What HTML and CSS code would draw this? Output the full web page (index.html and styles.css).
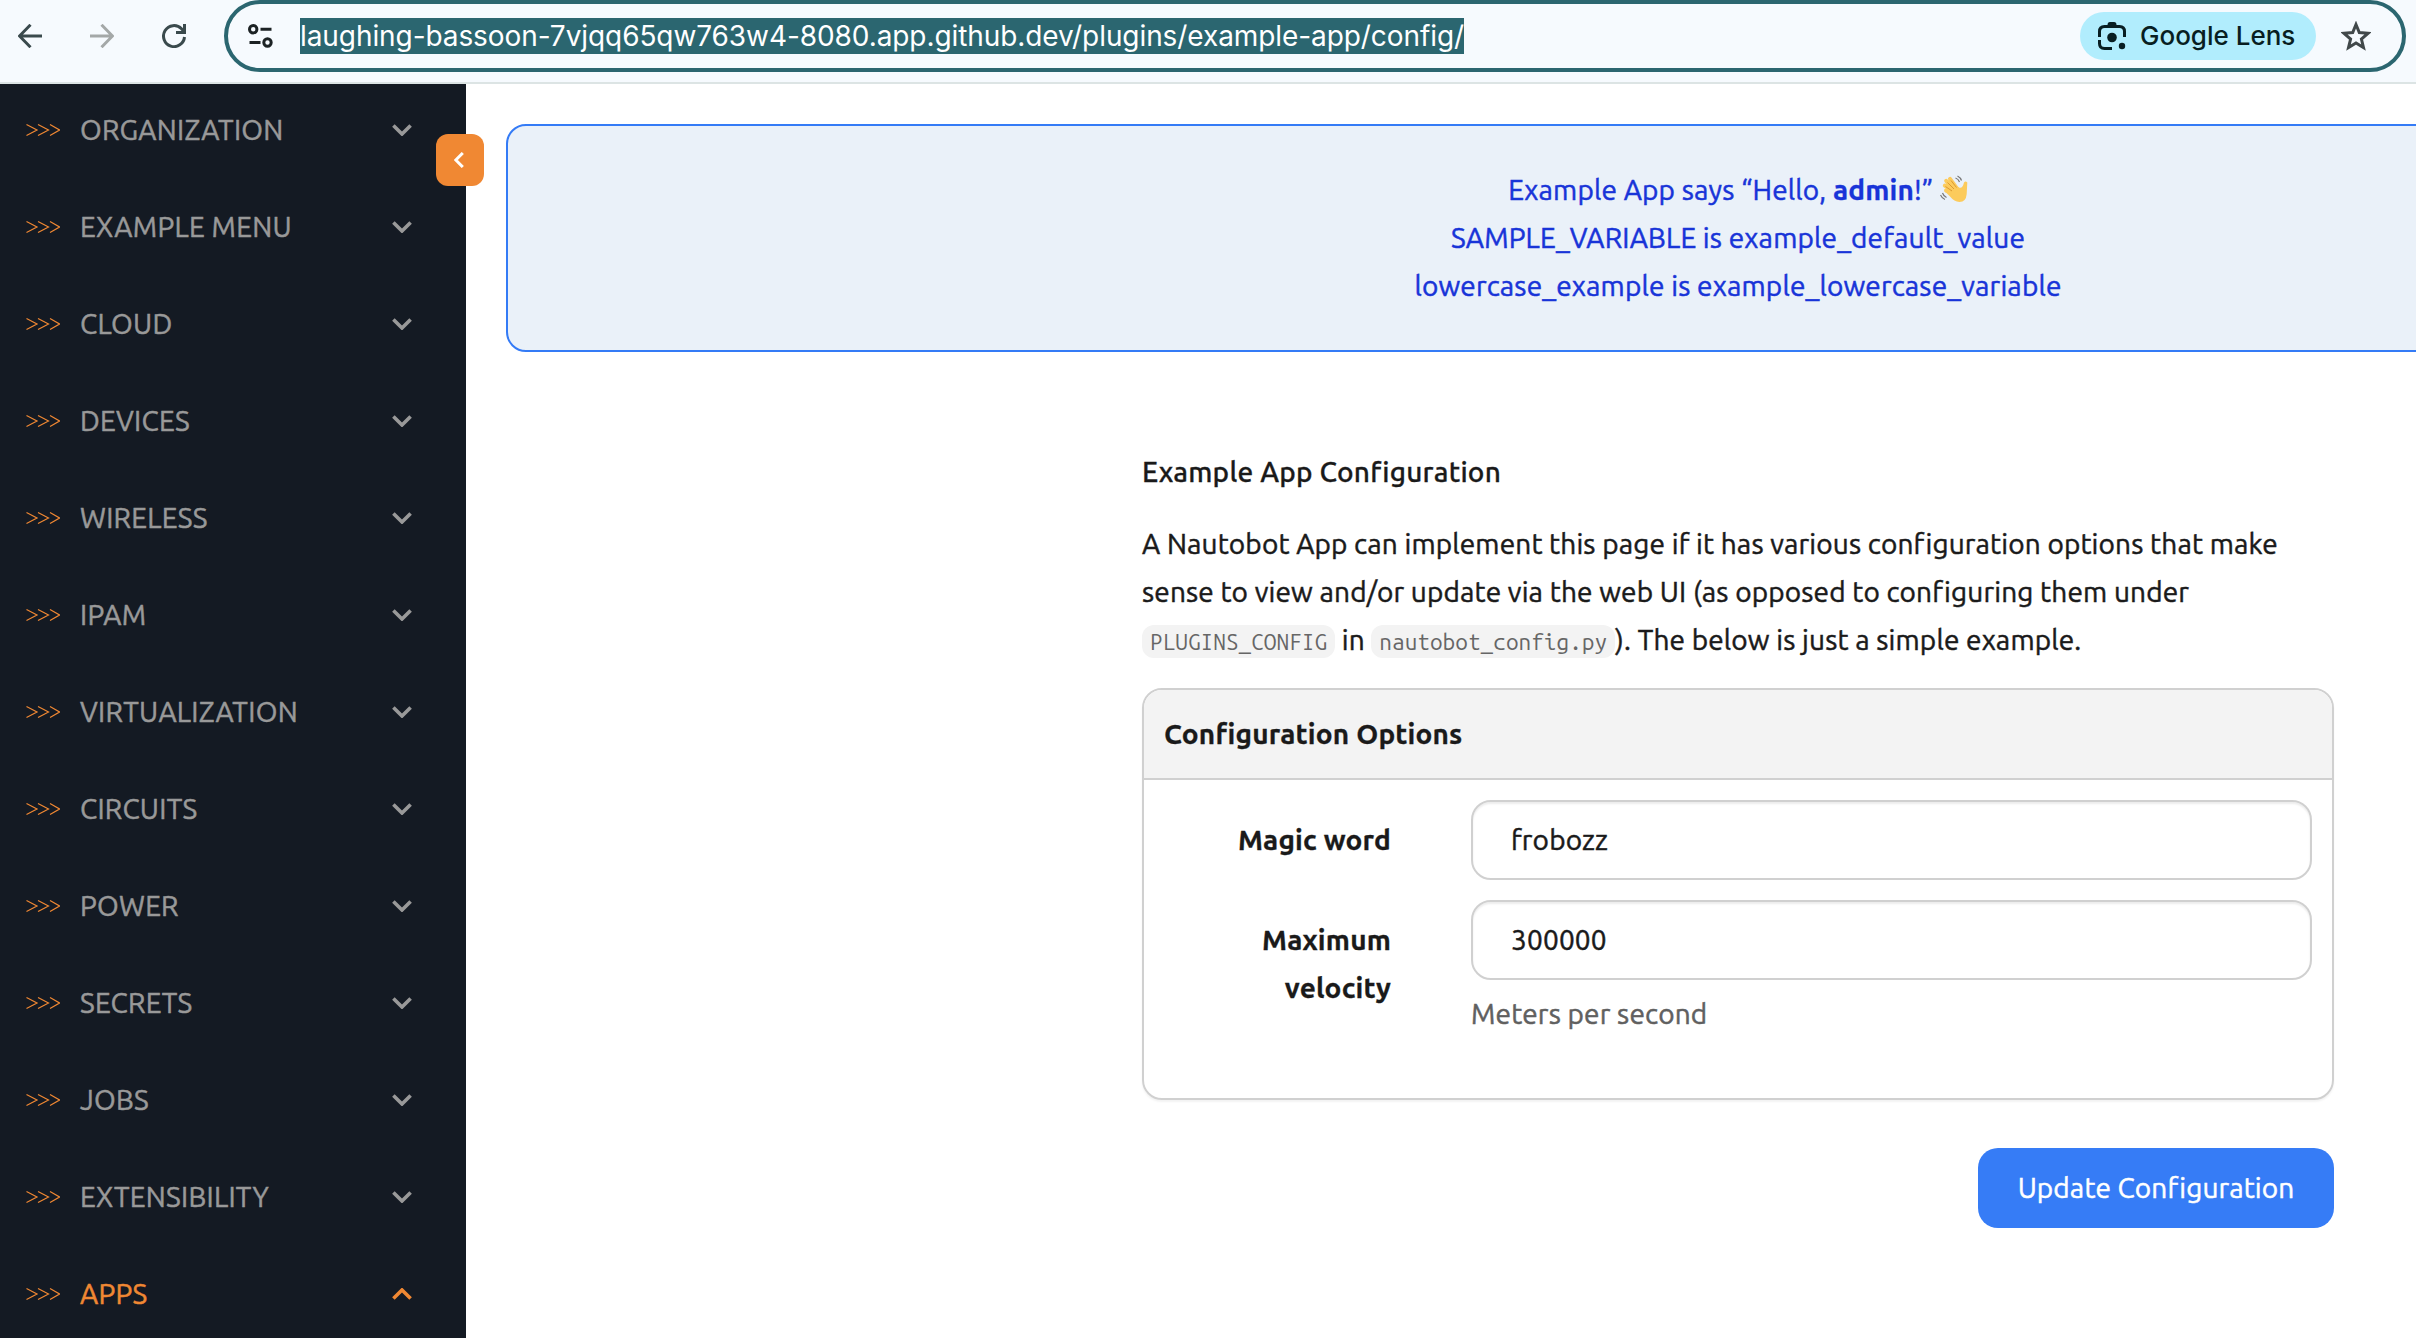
FILE: index.html
```html
<!DOCTYPE html>
<html lang="en">
<head>
<meta charset="utf-8">
<title>Example App Configuration</title>
<link rel="stylesheet" href="styles.css">
</head>
<body>
<svg class="defs" aria-hidden="true">
  <symbol id="arrows" viewBox="0 0 34 14"><path d="M0.5 1.5 11 7 0.5 12.5M12 1.5 22.500 7 12 12.5M24 1.500 33.500 7 24 12.500"/></symbol>
  <symbol id="chevron" viewBox="0 0 20 12"><path d="M1.400 1.500 10 10 18.600 1.500"/></symbol>
</svg>
<header class="toolbar">
  <nav class="history">
    <svg class="back" viewBox="0 0 24 24"><path d="M24 12H2M12.500 0.800 1.500 12 12.500 23.200"/></svg>
    <svg class="forward" viewBox="0 0 24 24"><path d="M0 12H22M11.500 0.800 22.500 12 11.500 23.200"/></svg>
    <svg class="reload" viewBox="0 0 26 24"><path d="M22.500 13A10.500 10.500 0 1 1 19.500 4.700L22 7.500"/><path d="M22.500 0V8.500H14"/></svg>
  </nav>
  <div class="address">
    <svg class="tune" viewBox="0 0 26 24"><circle cx="5.200" cy="5.200" r="3.700"/><path d="M12.500 5.200H23.500M1.500 18.500H12.500"/><circle cx="19.500" cy="18.500" r="3.700"/></svg>
    <span class="url">laughing-bassoon-7vjqq65qw763w4-8080.app.github.dev/plugins/example-app/config/</span>
    <span class="lens">
      <svg viewBox="0 0 28 28"><path class="stroke" d="M1.500 15V9.500Q1.500 4.500 6.500 4.500H21.500Q26.500 4.500 26.500 9.500V15M1.500 18V21.500Q1.500 26.500 6.500 26.500H14"/><path d="M9.500 4.500V3Q9.500 0 12 0H16Q18.500 0 18.500 3V4.500Z"/><circle cx="14" cy="15.500" r="4.800"/><circle cx="24" cy="24" r="3.200"/></svg>
      <span>Google Lens</span>
    </span>
    <svg class="star" viewBox="0 0 30 30"><path d="M15 3.500 18.300 11.600 27 12.300 20.400 18 22.500 26.500 15 22 7.500 26.500 9.600 18 3 12.300 11.700 11.600Z"/></svg>
  </div>
</header>
<div class="layout">
  <aside class="sidebar">
    <a class="item"><svg class="arrows"><use href="#arrows"/></svg><span>ORGANIZATION</span><svg class="chevron"><use href="#chevron"/></svg></a>
    <a class="item"><svg class="arrows"><use href="#arrows"/></svg><span>EXAMPLE MENU</span><svg class="chevron"><use href="#chevron"/></svg></a>
    <a class="item"><svg class="arrows"><use href="#arrows"/></svg><span>CLOUD</span><svg class="chevron"><use href="#chevron"/></svg></a>
    <a class="item"><svg class="arrows"><use href="#arrows"/></svg><span>DEVICES</span><svg class="chevron"><use href="#chevron"/></svg></a>
    <a class="item"><svg class="arrows"><use href="#arrows"/></svg><span>WIRELESS</span><svg class="chevron"><use href="#chevron"/></svg></a>
    <a class="item"><svg class="arrows"><use href="#arrows"/></svg><span>IPAM</span><svg class="chevron"><use href="#chevron"/></svg></a>
    <a class="item"><svg class="arrows"><use href="#arrows"/></svg><span>VIRTUALIZATION</span><svg class="chevron"><use href="#chevron"/></svg></a>
    <a class="item"><svg class="arrows"><use href="#arrows"/></svg><span>CIRCUITS</span><svg class="chevron"><use href="#chevron"/></svg></a>
    <a class="item"><svg class="arrows"><use href="#arrows"/></svg><span>POWER</span><svg class="chevron"><use href="#chevron"/></svg></a>
    <a class="item"><svg class="arrows"><use href="#arrows"/></svg><span>SECRETS</span><svg class="chevron"><use href="#chevron"/></svg></a>
    <a class="item"><svg class="arrows"><use href="#arrows"/></svg><span>JOBS</span><svg class="chevron"><use href="#chevron"/></svg></a>
    <a class="item"><svg class="arrows"><use href="#arrows"/></svg><span>EXTENSIBILITY</span><svg class="chevron"><use href="#chevron"/></svg></a>
    <a class="item active"><svg class="arrows"><use href="#arrows"/></svg><span>APPS</span><svg class="chevron"><use href="#chevron"/></svg></a>
    <button class="collapse" aria-label="Collapse"><svg viewBox="0 0 10 16"><path d="M8.800 1 1.800 8 8.800 15"/></svg></button>
  </aside>
  <main class="content">
    <section class="banner">
      <div>Example App says “Hello, <b>admin</b>!” <svg class="wave" viewBox="0 0 28 28"><path class="fingers" d="M16 19 6 15.500M16 18 4.800 10.500M17 17 6.200 5.800M18 15 10 3.800"/><path class="hand" d="M5.500 17 12 9 19 12.500Q22.500 14 24 7.500 25.500 5.500 27.300 7.500L26.700 19Q26 27 19.500 27 14 26.500 10.500 22Z"/><path class="fold" d="M7.500 7.500 14 14M5.500 11.500 12 16M11 5.500 16.500 12.500"/><path class="motion" d="M15.500 3Q18.500 4 19.500 7M17.500 1Q20.500 2.500 21.500 5.500M2.500 18Q3.500 21 6.500 22.500M0.500 20Q2 23.500 5 24.500"/></svg></div>
      <div>SAMPLE_VARIABLE is example_default_value</div>
      <div>lowercase_example is example_lowercase_variable</div>
    </section>
    <form class="config">
      <h1>Example App Configuration</h1>
      <p>A Nautobot App can implement this page if it has various configuration options that make<br>sense to view and/or update via the web UI (as opposed to configuring them under<br><code>PLUGINS_CONFIG</code> in <code>nautobot_config.py</code>). The below is just a simple example.</p>
      <div class="card">
        <h2>Configuration Options</h2>
        <div class="fields">
          <label>Magic word</label>
          <div><div class="input">frobozz</div></div>
          <label>Maximum<br>velocity</label>
          <div><div class="input">300000</div><div class="help">Meters per second</div></div>
        </div>
      </div>
      <button class="submit" type="button">Update Configuration</button>
    </form>
  </main>
</div>
</body>
</html>
```
FILE: styles.css
```css
* { box-sizing: border-box; }
body {
  margin: 0;
  height: 1338px;
  overflow: hidden;
  background: #fff;
  color: #1a1a1a;
  font: 28px/48px Ubuntu, "Noto Sans", sans-serif;
  letter-spacing: 0.17px;
}
svg { display: block; flex: none; fill: none; stroke: currentColor; }
.defs { width: 0; height: 0; position: absolute; }
.toolbar {
  display: flex;
  height: 84px;
  padding-right: 10px;
  border-bottom: 2px solid #dce4e4;
  background: #f6fafe;
  font-family: Inter, sans-serif;
  letter-spacing: 0;
}
.history { display: flex; align-items: flex-start; width: 224px; padding: 24px 0 0 18px; color: #3a4a4d; }
.history svg { width: 24px; height: 24px; stroke-width: 3; }
.history .forward { margin-left: 48px; color: #a4a8a8; }
.history .reload { width: 26px; margin-left: 48px; }
.address {
  display: flex;
  flex: 1;
  align-items: center;
  height: 72px;
  padding: 0 31px 0 20px;
  border: 4px solid #2b6670;
  border-radius: 36px;
}
.tune { width: 26px; height: 24px; color: #1c2224; stroke-width: 3; }
.url { margin: 0 auto 0 26px; height: 36px; line-height: 37px; letter-spacing: -0.08px; background: #2b6670; color: #fff; }
.lens {
  display: flex;
  align-items: center;
  width: 236px;
  height: 48px;
  margin-right: 25px;
  padding-left: 18px;
  gap: 14px;
  border-radius: 24px;
  background: #b1edfd;
  color: #081e22;
  font-size: 26px;
  font-weight: 500;
}
.lens span { line-height: 50px; }
.lens svg { width: 28px; height: 28px; fill: currentColor; stroke: none; }
.lens .stroke { fill: none; stroke: currentColor; stroke-width: 3; }
.star { width: 30px; height: 30px; color: #41484a; stroke-width: 3; }
.layout { display: flex; height: 1254px; -webkit-text-stroke: 0.5px; }
.sidebar { position: relative; width: 466px; background: #141a23; color: #999; letter-spacing: 0.27px; }
.item { display: flex; align-items: center; height: 97px; padding: 0 54px 0 26px; }
.item:first-child { margin-top: -3px; }
.item span { flex: 1; margin: 0 0 0 20px; }
.arrows { width: 34px; height: 14px; color: #f08833; stroke-width: 1.2; }
.chevron { width: 20px; height: 12px; stroke-width: 3.6; }
.active { color: #f08833; }
.active .chevron { transform: rotate(180deg); }
.collapse {
  position: absolute;
  left: 436px;
  top: 50px;
  display: grid;
  place-items: center;
  width: 48px;
  height: 52px;
  padding: 0 2px 0 0;
  border: 0;
  border-radius: 12px;
  background: #f08833;
  color: #fff;
}
.collapse svg { width: 10px; height: 16px; stroke-width: 3; }
.content { flex: 1; min-width: 0; padding: 40px 0 0 40px; overflow: hidden; }
.banner {
  width: 2464px;
  height: 228px;
  padding-top: 40px;
  border: 2px solid #347bf6;
  border-radius: 20px;
  background: #eaf1f9;
  color: #1834d8;
  text-align: center;
}
b, h1, h2, label { -webkit-text-stroke: 0.3px; }
.wave { display: inline-block; width: 28px; height: 28px; vertical-align: -3px; stroke: none; }
.fingers { stroke: #fccb5c; stroke-width: 4; stroke-linecap: round; }
.hand { fill: #fccb5c; }
.fold { stroke: #dc9a32; stroke-width: 1; }
.motion { stroke: #777; stroke-width: 1.2; }
.config { display: flex; flex-direction: column; width: 1192px; margin: 96px 0 0 636px; }
h1, h2, p { margin: 0; font-size: 28px; line-height: 48px; }
h1 { font-weight: 500; letter-spacing: 0.22px; }
p { margin: 24px 0; letter-spacing: 0.15px; white-space: nowrap; }
code {
  padding: 4px 8px;
  border-radius: 12px;
  background: #f3f3f3;
  color: #666;
  font: 22.6px "Ubuntu Mono", "DejaVu Sans Mono", monospace;
  letter-spacing: 0;
  -webkit-text-stroke: 0;
}
.card { height: 412px; border: 2px solid #d0d0d0; border-radius: 20px; box-shadow: 0 2px 2px rgba(0,0,0,.05); overflow: hidden; }
h2 { height: 90px; padding: 20px 20px 0; border-bottom: 2px solid #d0d0d0; background: #f3f3f3; font-weight: 700; letter-spacing: 0.17px; }
.fields { display: grid; grid-template-columns: 247px 841px; gap: 20px 80px; padding-top: 20px; }
label { padding-top: 16px; font-weight: 700; text-align: right; }
.input { height: 80px; padding: 14px 38px; border: 2px solid #d0d0d0; border-radius: 20px; box-shadow: inset 0 2px 2px rgba(0,0,0,.075); }
.help { margin-top: 10px; color: #606060; }
.submit {
  align-self: flex-end;
  width: 356px;
  height: 80px;
  margin-top: 48px;
  padding: 0;
  border: 0;
  border-radius: 20px;
  background: #367cf6;
  color: #fff;
  font: inherit;
  letter-spacing: 0.12px;
}
```
